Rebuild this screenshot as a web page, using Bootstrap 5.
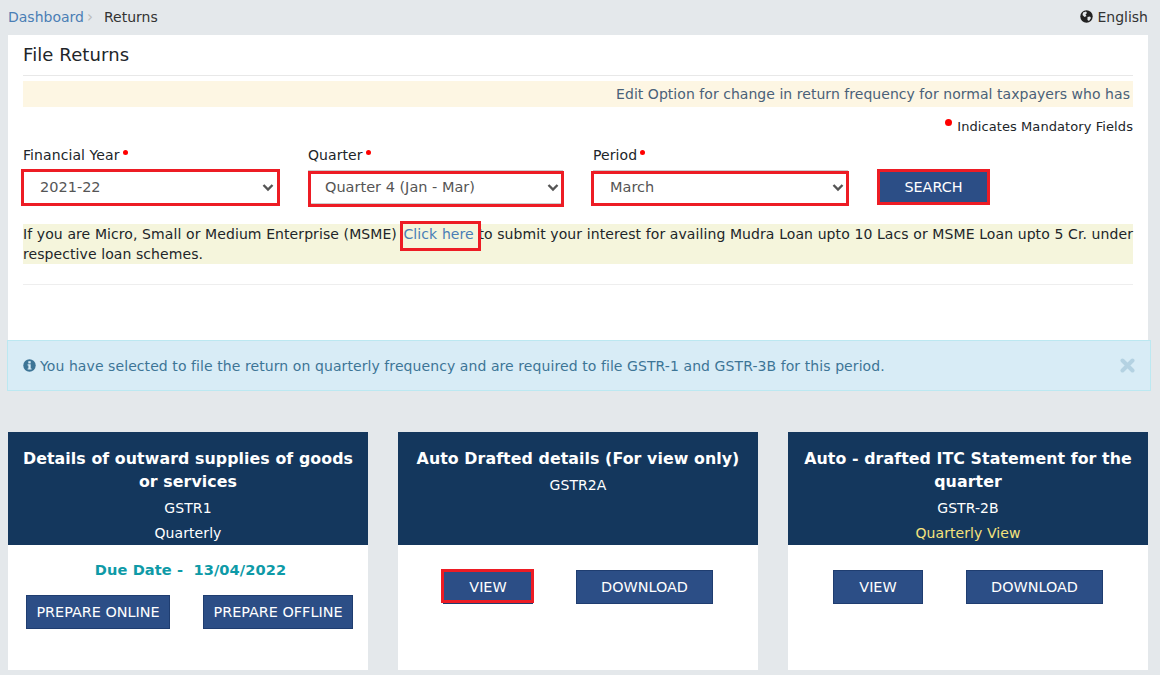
<!DOCTYPE html>
<html lang="en">
<head>
<meta charset="utf-8">
<title>File Returns</title>
<link href="https://cdn.jsdelivr.net/npm/bootstrap@5.3.0/dist/css/bootstrap.min.css" rel="stylesheet">
<style>
html,body{height:675px;overflow:hidden}
body{background:#e4e8eb;font-family:"DejaVu Sans","Liberation Sans",sans-serif;font-size:14px;letter-spacing:.08px;color:#212529;line-height:20px}
.shell{width:1140px;margin-left:8px}
.topbar{height:35px;color:#333;letter-spacing:0;padding-bottom:2px}
.topbar a{color:#4a7eb5;text-decoration:none}
.crumbsep{color:#bbb;margin:0 11px 0 3px;font-size:15px}
.sheet{background:#fff;height:305px;padding:0 15px}
.sheet-title{font-size:18px;letter-spacing:.1px;line-height:24px;padding-top:8px;height:41px;border-bottom:1px solid #e8e8e8;margin:0;font-weight:400;color:#212529}
.ticker{background:#fdf6e3;height:26px;margin-top:5px;line-height:26px;letter-spacing:.04px;text-align:right;padding-right:3px;color:#4a6178;white-space:nowrap;overflow:hidden}
.mand{text-align:right;font-size:13px;line-height:20px;margin-top:10px;height:20px}
.dot{display:inline-block;width:6px;height:6px;border-radius:50%;background:#f00;vertical-align:top}
.mand .dot{width:7px;height:7px;margin:2px 5px 0 0}
.fields{--bs-gutter-x:30px;margin-top:8px}
.field-label{display:block;height:25px;line-height:20px;margin:0}
.field-label .dot{width:5px;height:5px;margin:5px 0 0 3px}
.boxed{position:relative;display:inline-block}
.boxed::after{content:"";position:absolute;border:3px solid #ed1c24;pointer-events:none}
.r-fy::after{top:-1px;bottom:-2px;left:-2px;right:-2px}
.r-q::after{top:1px;bottom:-3px;left:0;right:-1px}
.r-p::after{top:1px;bottom:-2px;left:-2px;right:-1px}
.r-s::after{top:-1px;bottom:-1px;left:-1px;right:-1px}
.r-v::after{top:-1px;bottom:1px;left:-2px;right:-1px}
.pick{display:block;height:34px;border-radius:0;border:0;border-bottom:1px solid #ccc;border-top:1px solid #ccc;color:#555;font-size:14.5px;padding:2px 12px 0 17px;width:255px;background-size:12px 9px;background-position:right 4px center;background-image:url("data:image/svg+xml,%3csvg xmlns='http://www.w3.org/2000/svg' viewBox='0 0 12 9'%3e%3cpath fill='none' stroke='%23555' stroke-width='2.4' d='M1.5 2 6 6.5 10.5 2'/%3e%3c/svg%3e")}
.btn-navy{--bs-btn-bg:#2c4e86;--bs-btn-border-color:#1f3d70;--bs-btn-color:#fff;--bs-btn-hover-bg:#2c4e86;--bs-btn-hover-color:#fff;--bs-btn-hover-border-color:#1f3d70;border-radius:0;font-size:14.4px;line-height:20px;padding:6px 0;height:34px;text-transform:uppercase;display:block}
.slot-s{margin-top:25px}
.b-search{width:111px}
.msme{background:#f5f5dc;margin-top:20px;height:40px;text-align:justify}
.msme a{color:#4a7eb5;text-decoration:none;position:relative;margin-left:2px}
.msme a::after{content:"";position:absolute;top:-5px;bottom:-9px;left:-4px;right:-7px;border:3px solid #ed1c24}
.rule{height:1px;background:#eee;margin-top:20px}
.notice{background:#d8ecf6;border:1px solid #bce8f1;height:51px;width:1144px;margin-left:-1px;padding:0 15px;color:#3d7596}
.x-close{width:15px;height:15px}
.deck{--bs-gutter-x:30px;margin-top:41px}
.tile{background:#fff;height:238px}
.tile-head{background:#14375d;color:#fff;height:113px;text-align:center;padding:15px 10px 0}
.tile-name{font-weight:700;font-size:15.8px;line-height:23px}
.tile-code{line-height:20px;margin-top:5px}
.tile-freq{line-height:20px;margin-top:5px}
.yellow{color:#f5e27c}
.due{color:#0e9aa7;font-weight:700;font-size:14.6px;text-align:center;padding:15px 0 0 5px;line-height:20px}
.acts{display:flex;justify-content:center}
.a1{gap:33px;margin-top:15px;padding-left:3px}
.a2{gap:43px;padding-top:25px}
.w-po{width:144px}.w-pf{width:150px}.w-v{width:90px}.w-d{width:137px}
</style>
</head>
<body>
<div class="shell">
  <div class="topbar d-flex justify-content-between align-items-center">
    <div><a href="#">Dashboard</a><span class="crumbsep">&#8250;</span>Returns</div>
    <div class="d-flex align-items-center gap-1">
      <svg width="13" height="13" viewBox="0 0 13 13"><circle cx="6.5" cy="6.5" r="6.2" fill="#222"/><path d="M3 2.5 6 1.5 7 3 5.5 4.5 6.5 6 4.5 7 2.5 5ZM7.5 7 10 6.5 11 8 9 11 7.5 10Z" fill="#e4e8eb"/></svg>
      <span>English</span>
    </div>
  </div>
  <div class="sheet">
    <h1 class="sheet-title">File Returns</h1>
    <div class="ticker">Edit Option for change in return frequency for normal taxpayers who has</div>
    <div class="mand"><span class="dot"></span>Indicates Mandatory Fields</div>
    <div class="row fields">
      <div class="col-3">
        <label class="field-label">Financial Year<span class="dot"></span></label>
        <div class="boxed r-fy"><select class="form-select pick"><option>2021-22</option></select></div>
      </div>
      <div class="col-3">
        <label class="field-label">Quarter<span class="dot"></span></label>
        <div class="boxed r-q"><select class="form-select pick"><option>Quarter 4 (Jan - Mar)</option></select></div>
      </div>
      <div class="col-3">
        <label class="field-label">Period<span class="dot"></span></label>
        <div class="boxed r-p"><select class="form-select pick"><option>March</option></select></div>
      </div>
      <div class="col-3">
        <div class="boxed r-s slot-s"><button class="btn btn-navy b-search">Search</button></div>
      </div>
    </div>
    <div class="msme">If you are Micro, Small or Medium Enterprise (MSME) <a href="#">Click here</a> to submit your interest for availing Mudra Loan upto 10 Lacs or MSME Loan upto 5 Cr. under respective loan schemes.</div>
    <div class="rule"></div>
  </div>
  <div class="notice d-flex align-items-center justify-content-between">
    <div class="d-flex align-items-center gap-1">
      <svg width="13" height="13" viewBox="0 0 13 13"><circle cx="6.5" cy="6.5" r="6.2" fill="#3d7596"/><rect x="5.3" y="2.2" width="2.4" height="2.2" fill="#d8ecf6"/><path d="M4.6 5.3H7.7V9.4H8.6V10.6H4.6V9.4H5.4V6.5H4.6Z" fill="#d8ecf6"/></svg>
      <span>You have selected to file the return on quarterly frequency and are required to file GSTR-1 and GSTR-3B for this period.</span>
    </div>
    <svg class="x-close" viewBox="0 0 15 15"><path d="M2.5 2.5 12.5 12.5M12.5 2.5 2.5 12.5" stroke="#b4d2e2" stroke-width="4" stroke-linecap="round"/></svg>
  </div>
  <div class="row deck">
    <div class="col-4">
      <div class="tile">
        <div class="tile-head">
          <div class="tile-name">Details of outward supplies of goods or services</div>
          <div class="tile-code">GSTR1</div>
          <div class="tile-freq">Quarterly</div>
        </div>
        <div class="due">Due Date -&nbsp; 13/04/2022</div>
        <div class="acts a1">
          <button class="btn btn-navy w-po">Prepare Online</button>
          <button class="btn btn-navy w-pf">Prepare Offline</button>
        </div>
      </div>
    </div>
    <div class="col-4">
      <div class="tile">
        <div class="tile-head">
          <div class="tile-name">Auto Drafted details (For view only)</div>
          <div class="tile-code">GSTR2A</div>
        </div>
        <div class="acts a2">
          <div class="boxed r-v"><button class="btn btn-navy w-v">View</button></div>
          <button class="btn btn-navy w-d">Download</button>
        </div>
      </div>
    </div>
    <div class="col-4">
      <div class="tile">
        <div class="tile-head">
          <div class="tile-name">Auto - drafted ITC Statement for the quarter</div>
          <div class="tile-code">GSTR-2B</div>
          <div class="tile-freq yellow">Quarterly View</div>
        </div>
        <div class="acts a2">
          <button class="btn btn-navy w-v">View</button>
          <button class="btn btn-navy w-d">Download</button>
        </div>
      </div>
    </div>
  </div>
</div>
<script src="https://cdn.jsdelivr.net/npm/bootstrap@5.3.0/dist/js/bootstrap.bundle.min.js"></script>
</body>
</html>
